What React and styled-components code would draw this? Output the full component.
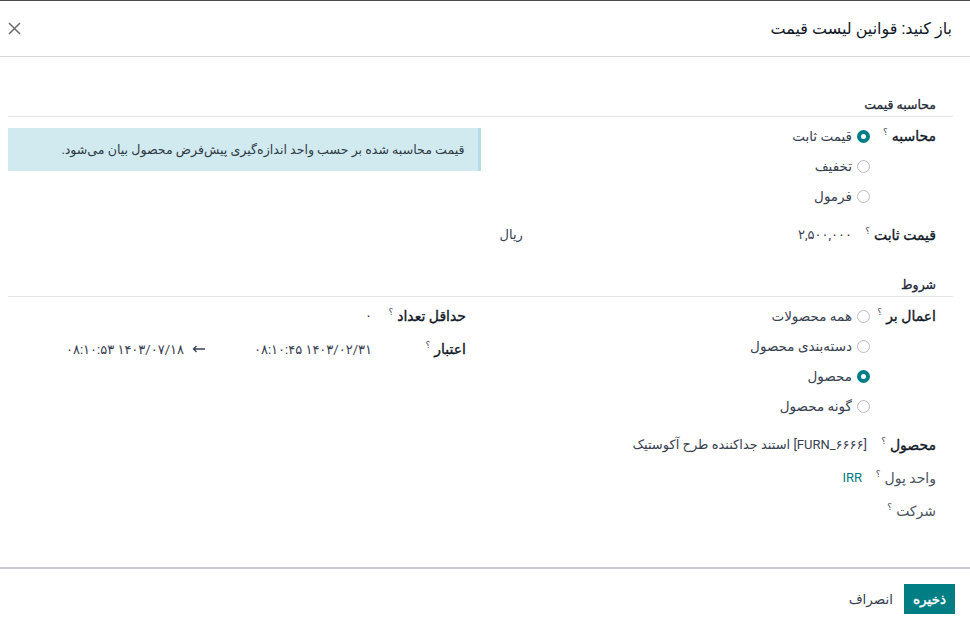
import React from 'react';
import styled, { createGlobalStyle } from 'styled-components';

const GlobalStyle = createGlobalStyle`
  html, body {
    margin: 0;
    padding: 0;
    background: #fff;
  }
  body {
    font-family: Roboto, "DejaVu Sans", sans-serif;
    font-size: 13px;
    color: #374151;
  }
`;

const calcOptions = [
  { label: 'قیمت ثابت', checked: true },
  { label: 'تخفیف' },
  { label: 'فرمول' },
];

const applyOptions = [
  { label: 'همه محصولات' },
  { label: 'دسته‌بندی محصول' },
  { label: 'محصول', checked: true },
  { label: 'گونه محصول' },
];

const RadioList = ({ options }) => (
  <Options>
    {options.map((o) => (
      <Option key={o.label}>
        <RadioDot $checked={o.checked} />
        {o.label}
      </Option>
    ))}
  </Options>
);

const Label = ({ children, $light }) => (
  <LabelCell $light={$light}>
    {children}
    <Help>؟</Help>
  </LabelCell>
);

const App = () => {
  return (
    <Modal dir="rtl">
      <GlobalStyle />
      <Backdrop />
      <Header>
        <Title>باز کنید: قوانین لیست قیمت</Title>
        <CloseButton aria-label="close">
          <svg width="13" height="13" viewBox="0 0 13 13">
            <path d="M1 1 L12 12 M12 1 L1 12" stroke="#6b6b6b" strokeWidth="1.5" fill="none" />
          </svg>
        </CloseButton>
      </Header>

      <Body>
        <SectionTitle>محاسبه قیمت</SectionTitle>
        <Columns>
          <Group $labelWidth={66} $pad={17}>
            <Row $gap={9}>
              <Label>محاسبه</Label>
              <RadioList options={calcOptions} />
            </Row>
            <Row>
              <Label>قیمت ثابت</Label>
              <Monetary>
                <span>۲,۵۰۰,۰۰۰</span>
                <span>ریال</span>
              </Monetary>
            </Row>
          </Group>
          <Group $labelWidth={94} $pad={0}>
            <InfoBox>قیمت محاسبه شده بر حسب واحد اندازه‌گیری پیش‌فرض محصول بیان می‌شود.</InfoBox>
          </Group>
        </Columns>

        <SectionTitle $top={26}>شروط</SectionTitle>
        <Columns>
          <Group $labelWidth={66} $pad={17}>
            <Row $gap={9}>
              <Label>اعمال بر</Label>
              <RadioList options={applyOptions} />
            </Row>
            <Row $gap={3}>
              <Label>محصول</Label>
              <Value $padRight={3}>
                <Code>[FURN_۶۶۶۶]</Code> استند جداکننده طرح آکوستیک
              </Value>
            </Row>
            <Row $gap={3}>
              <Label $light>واحد پول</Label>
              <Value $padRight={8} $link>IRR</Value>
            </Row>
            <Row>
              <Label $light>شرکت</Label>
              <Value />
            </Row>
          </Group>
          <Group $labelWidth={94} $pad={15}>
            <Row $gap={3}>
              <Label>حداقل تعداد</Label>
              <Value>۰</Value>
            </Row>
            <Row>
              <Label>اعتبار</Label>
              <DateRange>
                <DateInput>۱۴۰۳/۰۲/۳۱ ۰۸:۱۰:۴۵</DateInput>
                <Arrow width="13" height="8" viewBox="0 0 13 8">
                  <path d="M13 4 H1.5 M4.5 1 L1.5 4 L4.5 7" stroke="#374151" strokeWidth="1.3" fill="none" />
                </Arrow>
                <DateInput>۱۴۰۳/۰۷/۱۸ ۰۸:۱۰:۵۳</DateInput>
              </DateRange>
            </Row>
          </Group>
        </Columns>
      </Body>

      <Footer>
        <SaveButton>ذخیره</SaveButton>
        <CancelButton>انصراف</CancelButton>
      </Footer>
    </Modal>
  );
};

export default App;

const Modal = styled.div`
  width: 970px;
  height: 626px;
  display: flex;
  flex-direction: column;
  background: #fff;
  overflow: hidden;
`;

const Backdrop = styled.div`
  height: 1px;
  background: #4a4a4a;
`;

const Header = styled.div`
  height: 55px;
  border-bottom: 1px solid #d6d6da;
  display: flex;
  align-items: center;
  justify-content: space-between;
  padding: 0 18px 0 8px;
`;

const Title = styled.h4`
  margin: 0;
  font-size: 16px;
  font-weight: normal;
  color: #111827;
`;

const CloseButton = styled.button`
  border: none;
  background: none;
  padding: 0;
  width: 13px;
  height: 13px;
  display: flex;
  cursor: pointer;
`;

const Body = styled.div`
  height: 510px;
  padding: 39px 17px 0 8px;
  box-sizing: border-box;
`;

const SectionTitle = styled.div`
  margin-top: ${(p) => p.$top || 0}px;
  padding: 0 17px 2px 0;
  line-height: 18px;
  font-size: 12.5px;
  color: #1f2937;
  -webkit-text-stroke: 0.3px #1f2937;
  border-bottom: 1px solid #e3e5e8;
`;

const Columns = styled.div`
  display: grid;
  grid-template-columns: 1fr 1fr;
  align-items: start;
`;

const Group = styled.div`
  padding-top: 4px;
  padding-right: ${(p) => p.$pad}px;
  padding-left: 16px;
  --label-width: ${(p) => p.$labelWidth}px;

  &:last-child {
    padding-left: ${(p) => (p.$pad === 0 ? 0 : 16)}px;
  }
`;

const Row = styled.div`
  display: grid;
  grid-template-columns: var(--label-width) 1fr;
  margin-bottom: ${(p) => p.$gap || 0}px;
  min-height: 30px;
`;

const LabelCell = styled.div`
  line-height: 30px;
  font-size: 14px;
  color: ${(p) => (p.$light ? '#4b5563' : '#111827')};
  -webkit-text-stroke: ${(p) => (p.$light ? '0' : '0.35px #111827')};
  white-space: nowrap;
`;

const Help = styled.sup`
  font-size: 9px;
  color: #4b5563;
  -webkit-text-stroke: 0;
  margin-right: 4px;
  vertical-align: 6px;
  line-height: 0;
`;

const Options = styled.div`
  display: flex;
  flex-direction: column;
`;

const Option = styled.label`
  height: 30px;
  display: flex;
  align-items: center;
  gap: 5px;
  font-size: 13.5px;
  color: #374151;
`;

const RadioDot = styled.span`
  width: 13px;
  height: 13px;
  box-sizing: border-box;
  border-radius: 50%;
  flex: none;
  border: ${(p) => (p.$checked ? '4px solid #017e84' : '1px solid #b9bcc2')};
  background: #fff;
`;

const Monetary = styled.div`
  display: flex;
  justify-content: space-between;
  align-items: center;
  line-height: 30px;
  padding: 0 18px 0 3px;
  font-size: 13px;
`;

const Value = styled.div`
  line-height: 30px;
  padding-right: ${(p) => p.$padRight || 0}px;
  color: ${(p) => (p.$link ? '#017e84' : '#374151')};
  font-size: 13px;
  white-space: nowrap;
`;

const Code = styled.span`
  direction: ltr;
  unicode-bidi: isolate;
`;

const DateRange = styled.div`
  display: flex;
  align-items: center;
  height: 30px;
`;

const DateInput = styled.div`
  width: 160px;
  font-size: 13px;
  color: #374151;
`;

const Arrow = styled.svg`
  margin: 0 7px 0 8px;
  flex: none;
`;

const InfoBox = styled.div`
  margin-top: 7px;
  height: 43px;
  box-sizing: border-box;
  display: flex;
  align-items: center;
  padding: 0 13px 0 12px;
  background: #d1eaef;
  border-right: 3px solid #b3dde7;
  color: #2f3b45;
  font-size: 12.6px;
`;

const Footer = styled.div`
  flex: 1;
  border-top: 2px solid #cbccd1;
  display: flex;
  align-items: flex-start;
  gap: 0;
  padding: 15px 15px 0;
`;

const SaveButton = styled.button`
  height: 30px;
  padding: 0 9px;
  border: none;
  background: #017e84;
  color: #fff;
  font-family: Roboto, "DejaVu Sans", sans-serif;
  font-size: 13.5px;
  -webkit-text-stroke: 0.4px #fff;
  cursor: pointer;
`;

const CancelButton = styled.button`
  height: 30px;
  padding: 0 11px;
  border: none;
  background: none;
  color: #374151;
  font-family: Roboto, "DejaVu Sans", sans-serif;
  font-size: 13.5px;
  cursor: pointer;
`;
